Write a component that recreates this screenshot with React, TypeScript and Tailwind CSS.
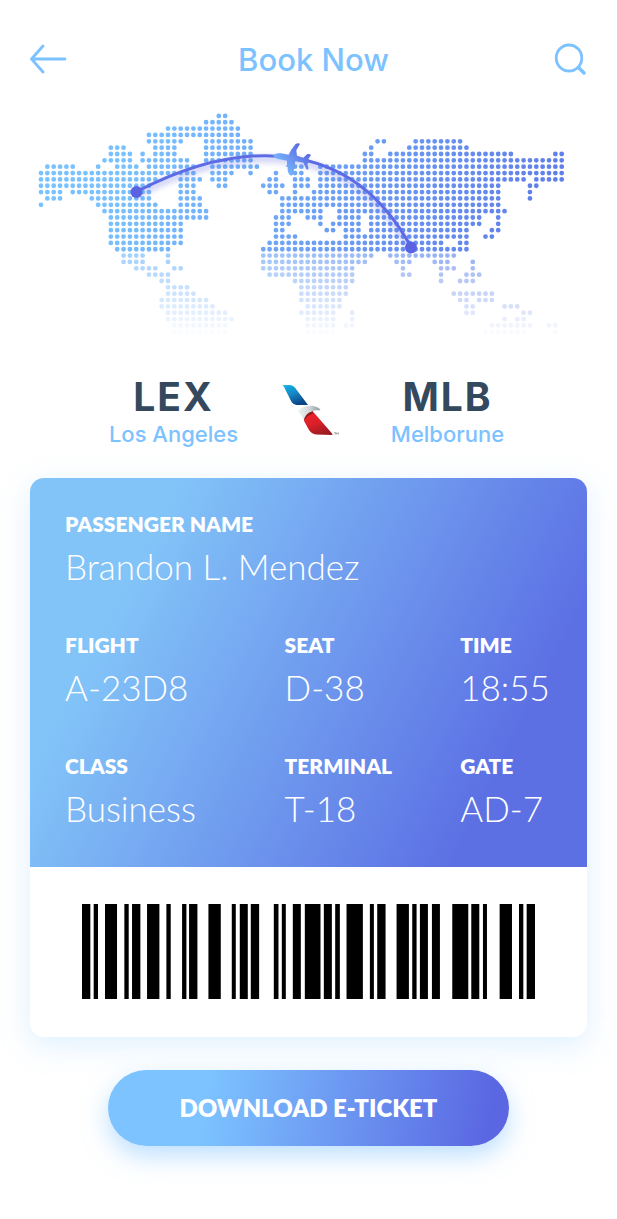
import React from "react";

type Run = [number, number];

// Filled columns for each row of the dotted world map.
const MAP_ROWS: Run[][] = [
  [[28, 29]],
  [[26, 30]],
  [[20, 31]],
  [[17, 31]],
  [[17, 22], [26, 33], [53, 54], [59, 66]],
  [[11, 13], [18, 21], [26, 33], [52, 52], [58, 67]],
  [[11, 14], [16, 16], [18, 21], [26, 33], [51, 52], [55, 74], [81, 82]],
  [[10, 14], [16, 23], [26, 33], [51, 82]],
  [[1, 5], [9, 9], [12, 15], [17, 24], [27, 34], [40, 41], [44, 82]],
  [[0, 24], [27, 30], [33, 33], [37, 37], [40, 41], [44, 82]],
  [[0, 18], [22, 25], [27, 29], [36, 37], [40, 42], [44, 76], [78, 82]],
  [[0, 17], [22, 24], [28, 29], [35, 38], [40, 42], [44, 72], [77, 78]],
  [[0, 3], [5, 17], [22, 24], [36, 37], [40, 40], [43, 72], [77, 77]],
  [[1, 3], [8, 17], [22, 25], [38, 72], [77, 77]],
  [[0, 0], [9, 18], [22, 25], [38, 72]],
  [[10, 26], [38, 44], [47, 73]],
  [[11, 26], [37, 39], [42, 44], [47, 50], [52, 69], [72, 72]],
  [[11, 22], [37, 39], [44, 44], [46, 50], [52, 69], [72, 72]],
  [[11, 22], [37, 38], [45, 46], [48, 50], [52, 67], [71, 72]],
  [[11, 22], [37, 40], [48, 67], [70, 71]],
  [[11, 22], [36, 63], [66, 67]],
  [[12, 20], [35, 67]],
  [[13, 16], [20, 20], [35, 52], [55, 65]],
  [[13, 16], [20, 20], [35, 51], [56, 58], [62, 64], [68, 68]],
  [[15, 18], [21, 22], [35, 49], [57, 57], [63, 65], [68, 68]],
  [[17, 20], [36, 49], [57, 58], [63, 63], [67, 69]],
  [[19, 20], [40, 49], [63, 63], [66, 68]],
  [[20, 23], [41, 48]],
  [[20, 24], [41, 48], [65, 71]],
  [[19, 26], [41, 47], [66, 67], [69, 71]],
  [[19, 27], [42, 47], [67, 68], [73, 75]],
  [[20, 29], [41, 46], [49, 49], [67, 68], [76, 77]],
  [[20, 30], [42, 46], [49, 49], [73, 73], [75, 76]],
  [[21, 29], [42, 46], [48, 49], [71, 77], [80, 81]],
  [[21, 29], [42, 46], [70, 76], [81, 81]],
];

const PITCH = 6.35;
const FADE_ROW = 22;

function rowOpacity(row: number) {
  return row < FADE_ROW ? 1 : 0.66 * (1 - (row - FADE_ROW) / 12.7);
}

// Start and end of every bar.
const BARS: Run[] = [
  [67, 92], [102, 115], [136, 172], [194, 207], [217, 242], [262, 299], [320, 333], [367, 380],
  [388, 413], [446, 483], [516, 528], [540, 564], [573, 598], [642, 656], [666, 678], [699, 723],
  [735, 782], [792, 816], [826, 840], [860, 909], [930, 942], [952, 977], [1010, 1047], [1057, 1070],
  [1080, 1104], [1116, 1140], [1177, 1225], [1234, 1258], [1269, 1281], [1319, 1356], [1377, 1390], [1400, 1425],
];

function WorldMap() {
  return (
    <svg viewBox="0 100 617 250" className="block w-full" role="img" aria-label="Flight route">
      <defs>
        <linearGradient id="dots" gradientUnits="userSpaceOnUse" x1="140" y1="120" x2="550" y2="270">
          <stop offset="0" stopColor="#79c1ff" />
          <stop offset="1" stopColor="#5f7ae8" />
        </linearGradient>
        <linearGradient id="plane" gradientUnits="userSpaceOnUse" x1="40" y1="120" x2="115" y2="50">
          <stop offset="0" stopColor="#7ac2ff" />
          <stop offset="1" stopColor="#5a67e2" />
        </linearGradient>
        <filter id="glow" x="-10%" y="-20%" width="120%" height="150%">
          <feGaussianBlur stdDeviation="3" />
        </filter>
      </defs>
      <g fill="url(#dots)">
        {MAP_ROWS.map((runs, row) => (
          <path
            key={row}
            opacity={rowOpacity(row)}
            d={runs
              .flatMap(([a, b]) => Array.from({ length: b - a + 1 }, (_, i) => a + i))
              .map((col) => `M${(38.6 + col * PITCH).toFixed(2)} ${(115.9 + row * PITCH).toFixed(2)}a2.4 2.4 0 1 0 4.8 0a2.4 2.4 0 1 0 -4.8 0`)
              .join("")}
          />
        ))}
      </g>
      <path d="M136 195C240 141 350 139 411 250" fill="none" stroke="#5a63e2" strokeWidth="5" opacity="0.4" filter="url(#glow)" />
      <path d="M136 192C240 138 350 135 411 247" fill="none" stroke="#5d6be4" strokeWidth="3" />
      <circle cx="136.5" cy="192" r="6" fill="#5a64e2" />
      <circle cx="411" cy="247.500" r="6" fill="#5a64e2" />
      <g transform="translate(265 130) scale(.3333)">
        <path
          fill="url(#plane)"
          d="M25 77Q31 69 47 70L71 74Q77 60 91 43Q98 37 105 41L94 61L96 77L115 83L126 73Q134 71 138 75L130 87L134 93L127 103L131 115Q129 120 124 118L115 98L91 94L87 117Q86 135 80 137L74 135Q66 125 68 112L62 109L66 104L66 92L42 88Q29 85 25 77Z"
        />
      </g>
    </svg>
  );
}

function AirlineLogo() {
  return (
    <svg viewBox="580 40 176 156" className="h-[52px] w-[58px] shrink-0" role="img" aria-label="Airline">
      <defs>
        <linearGradient id="tail" x1="0" y1="0" x2=".5" y2="1">
          <stop offset="0" stopColor="#10b3ec" />
          <stop offset=".5" stopColor="#1689c5" />
          <stop offset="1" stopColor="#0b4688" />
        </linearGradient>
        <linearGradient id="head" x1="0" y1="0" x2="1" y2="0">
          <stop offset="0" stopColor="#f1f3f4" />
          <stop offset=".5" stopColor="#d3d8db" />
          <stop offset="1" stopColor="#8d979d" />
        </linearGradient>
        <linearGradient id="body" x1=".3" y1="0" x2=".7" y2="1">
          <stop offset="0" stopColor="#f0222b" />
          <stop offset=".5" stopColor="#d8202a" />
          <stop offset="1" stopColor="#971b20" />
        </linearGradient>
      </defs>
      <path fill="url(#tail)" d="M581 43L604 42Q613 43 619 50L659 103L624 103Q614 102 609 94L591 58Q587 46 581 43Z" />
      <path fill="url(#head)" d="M628 121Q642 106 664 105Q690 105 697 119Q682 117 670 122Q650 132 648 153Q641 134 628 121Z" />
      <path fill="url(#body)" d="M647 151Q650 130 673 122L730 187Q734 191 733 194L684 192Q669 190 661 177Z" />
      <path fill="#8e1c20" d="M647 151Q648 130 673 122Q676 126 672 130Q655 134 647 151Z" />
      <path fill="none" stroke="#777" strokeWidth="2" d="M739 187h5M741.500 187v5M746 192v-5l2.500 3 2.500-3v5" />
    </svg>
  );
}

function Airport({ code, city }: { code: string; city: string }) {
  return (
    <div className="flex w-[136px] flex-col items-center font-['Inter',sans-serif]">
      <span className="text-[39px] leading-[42px] font-bold tracking-wider text-[#34495e]">{code}</span>
      <span className="text-[22px] leading-[32px] font-medium whitespace-nowrap text-[#7cc2ff]">{city}</span>
    </div>
  );
}

function Field({ label, value }: { label: string; value: string }) {
  return (
    <div>
      <dt className="text-[21px] leading-[28px] font-extrabold whitespace-nowrap uppercase">{label}</dt>
      <dd className="text-[35px] leading-[56px] font-light whitespace-nowrap">{value}</dd>
    </div>
  );
}

export default function App() {
  return (
    <main className="bg-white px-[30px] pt-[35px] pb-[73px] font-['Lato',sans-serif]">
      <header className="flex h-12 items-center justify-between text-[#7cc2ff]">
        <button type="button" aria-label="Back">
          <svg viewBox="0 0 37 30" className="h-[30px] w-[37px]" fill="none" stroke="currentColor" strokeWidth="2.800" strokeLinecap="round" strokeLinejoin="round">
            <path d="M13 2L1.500 15L13 28M1.500 15H35" />
          </svg>
        </button>
        <h1 className="pt-0.5 pl-1.5 font-['Inter',sans-serif] text-[31px] leading-[40px] font-medium">Book Now</h1>
        <button type="button" aria-label="Search">
          <svg viewBox="0 0 33 32" className="h-8 w-[33px]" fill="none" stroke="currentColor" strokeWidth="2.800" strokeLinecap="round">
            <ellipse cx="15" cy="15" rx="12.800" ry="13" />
            <path strokeWidth="3.500" d="M24.500 24.500L30 30" />
          </svg>
        </button>
      </header>

      <div className="-mx-[30px] mt-[17px]">
        <WorldMap />
      </div>

      <section className="mt-[26px] flex justify-center gap-10 pl-1">
        <Airport code="LEX" city="Los Angeles" />
        <div className="pt-2">
          <AirlineLogo />
        </div>
        <Airport code="MLB" city="Melborune" />
      </section>

      <section className="mt-7 overflow-hidden rounded-[14px] bg-white shadow-[0_8px_30px_rgba(124,194,255,0.25)]">
        <dl className="grid grid-cols-[220fr_176fr_92fr] gap-y-[37px] bg-[linear-gradient(117deg,#82c4f8_0%,#82c4f8_20%,#5c70e4_82%,#5c70e4_100%)] px-[35px] pt-8 pb-[31px] text-white">
          <div className="col-span-3">
            <Field label="Passenger name" value="Brandon L. Mendez" />
          </div>
          <Field label="Flight" value="A-23D8" />
          <Field label="Seat" value="D-38" />
          <Field label="Time" value="18:55" />
          <Field label="Class" value="Business" />
          <Field label="Terminal" value="T-18" />
          <Field label="Gate" value="AD-7" />
        </dl>
        <div className="px-[52px] pt-[37px] pb-[38px]">
          <svg viewBox="67 0 1358 285" preserveAspectRatio="none" className="block h-[95px] w-full" role="img" aria-label="Boarding barcode">
            {BARS.map(([a, b]) => (
              <rect key={a} x={a} y="0" width={b - a} height="285" />
            ))}
          </svg>
        </div>
      </section>

      <div className="mt-[33px] px-[78px]">
        <button
          type="button"
          className="h-[76px] w-full rounded-full bg-[linear-gradient(100deg,#7cc3ff_0%,#7cc3ff_25%,#5a66e2_95%)] text-[24px] font-extrabold whitespace-nowrap text-white shadow-[0_10px_24px_rgba(124,194,255,0.5)]"
        >
          DOWNLOAD E-TICKET
        </button>
      </div>
    </main>
  );
}
